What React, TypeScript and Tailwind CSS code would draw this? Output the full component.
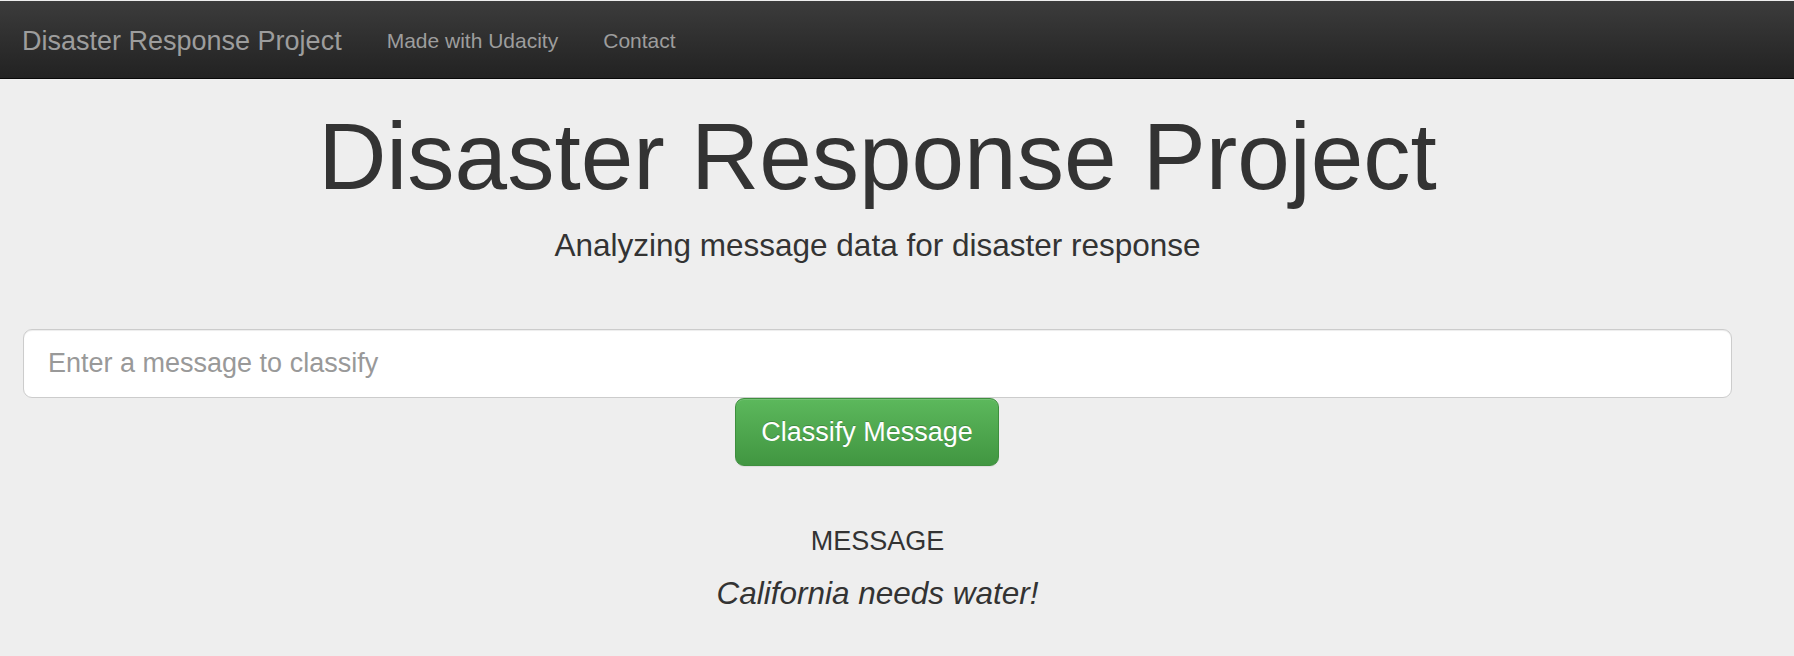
import React from 'react';

export default function App() {
    return (
        <div className="min-h-screen w-full bg-[#eeeeee] pt-px font-['Liberation_Sans',Arial,sans-serif] text-[#333333]">
            {/* Navbar */}
            <nav className="flex h-[78px] items-center border-b border-[#080808] bg-gradient-to-b from-[#3c3c3c] to-[#222222] pl-[22px] pt-[2px]">
                <a className="text-[27px] leading-[30px] text-[#9d9d9d]">Disaster Response Project</a>
                <div className="ml-[45px] flex gap-[45px] text-[21px] leading-[30px] text-[#9d9d9d]">
                    <a>Made with Udacity</a>
                    <a>Contact</a>
                </div>
            </nav>

            {/* Jumbotron */}
            <div className="w-[1755px] px-[23px]">
                <h1 className="mt-[25px] text-center text-[94.5px] leading-[104px]">Disaster Response Project</h1>
                <p className="mt-[15px] text-center text-[31.5px] leading-[45px]">
                    Analyzing message data for disaster response
                </p>

                <form className="mt-[61px]" onSubmit={e => e.preventDefault()}>
                    <input
                        type="text"
                        placeholder="Enter a message to classify"
                        className="block h-[69px] w-full rounded-[9px] border border-[#cccccc] bg-white px-[24px] text-[27px] text-[#555555] shadow-[inset_0_1px_1px_rgba(0,0,0,0.075)] outline-none placeholder:text-[#999999]"
                    />
                    <div className="ml-[712px]">
                        <button
                            type="submit"
                            className="h-[68px] w-[264px] rounded-[9px] border border-[#3e8f3e] bg-gradient-to-b from-[#5cb85c] to-[#419641] text-[27px] text-white shadow-[inset_0_1px_0_rgba(255,255,255,0.15),0_1px_1px_rgba(0,0,0,0.075)] [text-shadow:0_-1px_0_rgba(0,0,0,0.2)]"
                        >
                            Classify Message
                        </button>
                    </div>
                </form>

                <h4 className="mt-[60px] text-center text-[27px] leading-[30px]">MESSAGE</h4>
                <p className="mt-[17px] text-center text-[31.5px] italic leading-[40px]">California needs water!</p>
            </div>
        </div>
    );
}
